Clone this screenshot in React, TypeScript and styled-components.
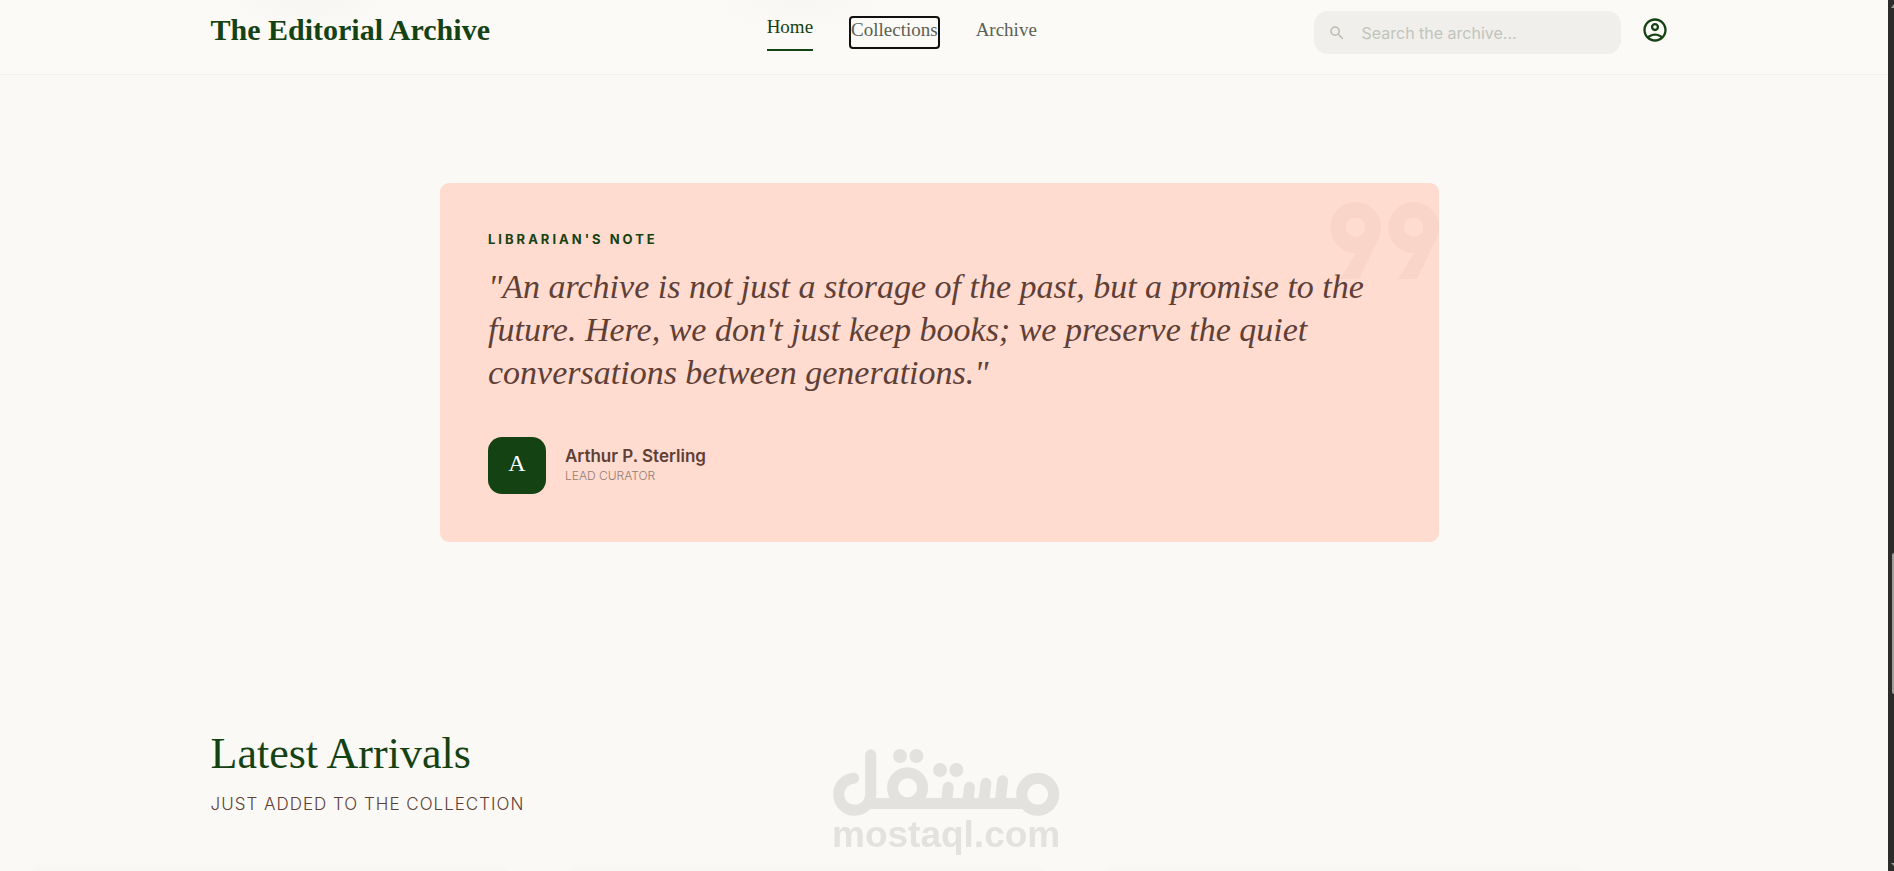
import React from "react";
import styled, { createGlobalStyle } from "styled-components";

const serif = `"Liberation Serif", "Times New Roman", serif`;
const sans = `Inter, "Liberation Sans", sans-serif`;
const green = "#154212";

const GlobalStyle = createGlobalStyle`
  * { box-sizing: border-box; }
  html, body { margin: 0; background: #faf9f5; }
  body { font-family: ${sans}; color: #1b1c1a; }
  h1, h2, p, blockquote, figure { margin: 0; font-weight: 400; }
`;

const Shell = styled.div`
  display: grid;
  grid-template-columns: minmax(0, 1fr) 6px;
  height: 100vh;
  overflow: hidden;
`;

const Page = styled.div`
  display: flex;
  flex-direction: column;
  min-width: 0;
  overflow: hidden;
`;

const Header = styled.header`
  flex: none;
  padding-right: 9px;
  border-bottom: 1px solid #f2f1ed;
  background:
    radial-gradient(ellipse 90px 34px at 310px 0, #f7f6f2, transparent),
    radial-gradient(ellipse 110px 40px at 800px 0, #f8f7f3, transparent),
    #fbfaf6;
`;

const Container = styled.div`
  width: 100%;
  max-width: 1522px;
  margin: 0 auto;
  padding: 0 32px;
`;

const Bar = styled(Container)`
  display: flex;
  justify-content: space-between;
  align-items: flex-start;
  height: 74px;
  padding-top: 11px;
`;

const Brand = styled.a`
  font: 700 30px/38px ${serif};
  color: ${green};
  text-decoration: none;
`;

const Nav = styled.nav`
  display: flex;
  gap: 38px;
  padding-top: 5px;
`;

const NavLink = styled.a<{ $active?: boolean; $focused?: boolean }>`
  height: ${(p) => (p.$active ? 35 : 29)}px;
  margin-top: ${(p) => (p.$active ? 0 : 2)}px;
  font: 400 19px/${(p) => (p.$active ? 22 : 24)}px ${serif};
  color: ${(p) => (p.$active ? green : "#5c5f55")};
  text-decoration: none;
  border-bottom: ${(p) => (p.$active ? `2px solid ${green}` : "0")};
  border-radius: ${(p) => (p.$focused ? 2 : 0)}px;
  outline: ${(p) => (p.$focused ? "2px solid #101010" : "none")};
`;

const Tools = styled.div`
  display: flex;
  justify-content: flex-end;
  gap: 20px;
`;

const SearchBox = styled.label`
  display: flex;
  align-items: center;
  gap: 16px;
  width: 307px;
  height: 43px;
  padding: 0 14px;
  border-radius: 14px;
  background: #f0efeb;
  color: #b9beb5;
`;

const SearchInput = styled.input`
  flex: 1;
  min-width: 0;
  padding: 0;
  border: 0;
  outline: 0;
  background: none;
  font: 400 16px/24px ${sans};
  &::placeholder { color: #c0c4bc; opacity: 1; }
`;

const IconButton = styled.button`
  display: flex;
  width: 28px;
  height: 38px;
  padding: 0;
  align-items: center;
  justify-content: center;
  border: 0;
  background: none;
  color: ${green};
`;

const Main = styled.main`
  padding-right: 9px;
`;

const NoteCard = styled.figure`
  position: relative;
  max-width: 999px;
  margin: 108px auto 0;
  padding: 48px;
  overflow: hidden;
  border-radius: 9px;
  background: #ffdbd0;
`;

const QuoteMark = styled.svg`
  position: absolute;
  top: 18px;
  right: 0;
`;

const NoteLabel = styled.p`
  position: relative;
  font: 700 13px/16px ${sans};
  letter-spacing: 3px;
  text-transform: uppercase;
  color: ${green};
`;

const Quote = styled.blockquote`
  position: relative;
  margin-top: 18px;
  font: italic 400 34px/43px ${serif};
  color: #5e4036;
  span { display: block; }
`;

const Author = styled.figcaption`
  display: flex;
  align-items: center;
  gap: 19px;
  margin-top: 43px;
`;

const AuthorText = styled.div`
  padding-bottom: 1px;
`;

const Avatar = styled.div`
  width: 58px;
  height: 57px;
  border-radius: 14px;
  background: ${green};
  color: #fff;
  font: 400 24px/52px ${serif};
  text-align: center;
`;

const AuthorName = styled.p`
  font: 600 17px/22px ${sans};
  color: #5e4036;
`;

const AuthorRole = styled.p`
  font: 300 12px/18px ${sans};
  text-transform: uppercase;
  color: #937d72;
`;

const Arrivals = styled.section`
  margin-top: 182px;
`;

const Heading = styled.h2`
  font: 400 44px/60px ${serif};
  color: ${green};
`;

const SubHeading = styled.p`
  margin-top: 8px;
  font: 300 17px/24px ${sans};
  letter-spacing: 1px;
  text-transform: uppercase;
  color: #5e4036;
`;

const Shelf = styled.div`
  display: flex;
  gap: 61px;
  margin-top: 49px;
  padding-left: 30px;
`;

const ShelfCard = styled.div`
  flex: none;
  width: 477px;
  height: 320px;
  border-radius: 9px;
  background: #f8f7f3;
`;

const Rail = styled.div`
  display: flex;
  flex-direction: column;
  align-items: flex-end;
  justify-content: space-between;
  padding: 4px 0;
  background: #2c2c2a;
`;

const Thumb = styled.div`
  flex: none;
  width: 2px;
  height: 141px;
  margin-top: auto;
  margin-bottom: 169px;
  border-radius: 2px 0 0 2px;
  background: #9f9f97;
`;

const Watermark = styled.div`
  position: fixed;
  left: 50%;
  bottom: 18px;
  width: 228px;
  margin-left: -115px;
  color: #e3e2df;
  pointer-events: none;
  svg { display: block; }
`;

const WatermarkText = styled.p`
  font: 700 37px/36px "Liberation Sans", Arial, sans-serif;
  text-align: center;
`;

const SearchIcon = () => (
  <svg width="18" height="18" viewBox="0 0 24 24" fill="currentColor" aria-hidden="true">
    <path d="M15.5 14h-.79l-.28-.27A6.47 6.47 0 0 0 16 9.5 6.5 6.5 0 1 0 9.5 16c1.61 0 3.09-.59 4.23-1.57l.27.28v.79l5 4.99L20.49 19l-4.99-5zm-6 0C7.01 14 5 11.99 5 9.5S7.01 5 9.5 5 14 7.01 14 9.5 11.99 14 9.5 14z" />
  </svg>
);

const AccountIcon = () => (
  <svg width="28" height="28" viewBox="0 0 24 24" fill="currentColor" aria-hidden="true">
    <path d="M12 2C6.48 2 2 6.48 2 12s4.48 10 10 10 10-4.48 10-10S17.52 2 12 2zM7.35 18.5C8.66 17.56 10.26 17 12 17s3.34.56 4.65 1.5C15.34 19.44 13.74 20 12 20s-3.34-.56-4.65-1.5zm10.79-1.38C16.45 15.8 14.32 15 12 15s-4.45.8-6.14 2.12C4.7 15.73 4 13.95 4 12c0-4.42 3.58-8 8-8s8 3.58 8 8c0 1.95-.7 3.73-1.86 5.12zM12 6c-1.93 0-3.5 1.57-3.5 3.5S10.07 13 12 13s3.5-1.57 3.5-3.5S13.93 6 12 6zm0 5c-.83 0-1.5-.67-1.5-1.5S11.17 8 12 8s1.5.67 1.5 1.5S12.83 11 12 11z" />
  </svg>
);

const RailArrow = ({ d }: { d: string }) => (
  <svg width="3" height="4" viewBox="0 0 3 4" fill="#9f9f97" aria-hidden="true">
    <path d={d} />
  </svg>
);

const MostaqlMark = () => (
  <svg width="228" height="68" viewBox="0 0 228 68" fill="none" stroke="currentColor" strokeWidth="11" strokeLinecap="round" aria-hidden="true">
    <path d="M21.700 29.300A16 16 0 1 0 38.700 45.300V5.800" />
    <path d="M34 54.500H194" strokeLinecap="butt" />
    <circle cx="75.600" cy="38.700" r="15" />
    <circle cx="205.700" cy="45.300" r="16" />
    <path d="M114.500 53l1.700-14.700M135.800 53l1.700-14.700M151.700 53l2.200-18.700M168.200 53l2.400-21.300" />
    <g fill="currentColor" stroke="none">
      <circle cx="68" cy="7" r="7" />
      <circle cx="84.400" cy="7" r="7" />
      <circle cx="108" cy="21" r="7" />
      <circle cx="124.400" cy="21" r="7" />
    </g>
  </svg>
);

export default function App() {
  return (
    <>
      <GlobalStyle />
      <Shell>
        <Page>
          <Header>
            <Bar>
              <Brand href="#">The Editorial Archive</Brand>
              <Nav>
                <NavLink href="#" $active>Home</NavLink>
                <NavLink href="#" $focused>Collections</NavLink>
                <NavLink href="#">Archive</NavLink>
              </Nav>
              <Tools>
                <SearchBox>
                  <SearchIcon />
                  <SearchInput type="text" aria-label="Search the archive" placeholder="Search the archive..." />
                </SearchBox>
                <IconButton type="button" aria-label="Account">
                  <AccountIcon />
                </IconButton>
              </Tools>
            </Bar>
          </Header>
          <Main>
            <NoteCard>
              <QuoteMark width="110" height="80" viewBox="0 0 110 80" aria-hidden="true">
                <g fill="#f8d4c9" fillRule="evenodd">
                  <path id="nine" d="M26.500 1a25.500 25.500 0 0 1 22.600 37.500L30 78H11L27 52A25.500 25.500 0 1 1 26.500 1zm0 15.500a9.700 9.700 0 1 0 0 19.400a9.700 9.700 0 0 0 0-19.400z" />
                  <use href="#nine" x="58" />
                </g>
              </QuoteMark>
              <NoteLabel>Librarian's Note</NoteLabel>
              <Quote>
                <span>"An archive is not just a storage of the past, but a promise to the</span>
                <span>future. Here, we don't just keep books; we preserve the quiet</span>
                <span>conversations between generations."</span>
              </Quote>
              <Author>
                <Avatar>A</Avatar>
                <AuthorText>
                  <AuthorName>Arthur P. Sterling</AuthorName>
                  <AuthorRole>Lead Curator</AuthorRole>
                </AuthorText>
              </Author>
            </NoteCard>
            <Arrivals>
              <Container>
                <Heading>Latest Arrivals</Heading>
                <SubHeading>Just added to the collection</SubHeading>
              </Container>
              <Shelf>
                <ShelfCard />
                <ShelfCard />
                <ShelfCard />
              </Shelf>
            </Arrivals>
          </Main>
        </Page>
        <Rail>
          <RailArrow d="M3 0v4H0z" />
          <Thumb />
          <RailArrow d="M0 0h3v3z" />
        </Rail>
      </Shell>
      <Watermark>
        <MostaqlMark />
        <WatermarkText>mostaql.com</WatermarkText>
      </Watermark>
    </>
  );
}
